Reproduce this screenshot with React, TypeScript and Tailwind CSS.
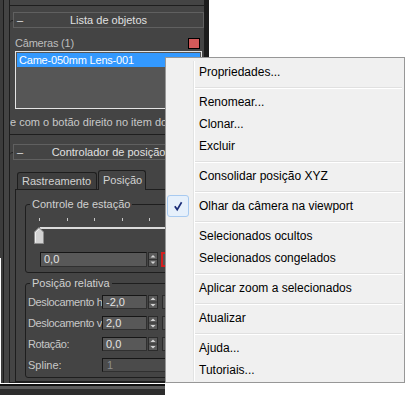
import React from "react";

const Spinner = ({ h = 15 }: { h?: number }) => (
  <svg width="10" height={h} viewBox={`0 0 10 ${h}`} className="block shrink-0">
    <rect x="0" y="0" width="10" height={h} fill="#5a5a5a" />
    <rect x="0.5" y="0.5" width="9" height={h - 1} fill="none" stroke="#2b2b2b" />
    <line x1="1" y1={h / 2} x2="9" y2={h / 2} stroke="#333" />
    <path d={`M2.5 ${h / 2 - 2} L5 ${h / 2 - 4.5} L7.5 ${h / 2 - 2} Z`} fill="#d4d4d4" />
    <path d={`M2.5 ${h / 2 + 2} L5 ${h / 2 + 4.5} L7.5 ${h / 2 + 2} Z`} fill="#d4d4d4" />
  </svg>
);

const Thumb = () => (
  <svg width="10" height="17" viewBox="0 0 10 17" className="block">
    <path d="M0.5 16.5 V5 L5 0.5 L9.5 5 V16.5 Z" fill="#d2d2d2" stroke="#8c8c8c" />
    <path d="M1.5 15.5 V5.4 L5 1.9" fill="none" stroke="#efefef" />
  </svg>
);

const Check = () => (
  <svg width="22" height="22" viewBox="0 0 22 22" className="block">
    <path d="M7.8 11.2 L10.2 14.6 L14.6 7.2" fill="none" stroke="#1b2d78" strokeWidth="1.7" />
  </svg>
);

const menuItems: (string | null)[] = [
  "Propriedades...",
  null,
  "Renomear...",
  "Clonar...",
  "Excluir",
  null,
  "Consolidar posição XYZ",
  null,
  "Olhar da câmera na viewport",
  null,
  "Selecionados ocultos",
  "Selecionados congelados",
  null,
  "Aplicar zoom a selecionados",
  null,
  "Atualizar",
  null,
  "Ajuda...",
  "Tutoriais...",
];

function Menu() {
  return (
    <div className="absolute left-[165px] top-[57px] z-30 w-[240px] border border-[#979797] bg-[#f0f0f0] pt-[3px] pb-[1px] pl-[1px] pr-[1px] text-[12px] text-black">
      {menuItems.map((it, i) =>
        it === null ? (
          <div key={i} className="flex h-[8px]">
            <div className="w-[26px]" />
            <div className="w-[1px] bg-[#e2e3e3]" />
            <div className="w-[1px] bg-white" />
            <div className="flex-1 flex flex-col pr-[1px]">
              <div className="h-[4px]" />
              <div className="h-[1px] bg-[#e0e0e0]" />
              <div className="h-[1px] bg-white" />
            </div>
          </div>
        ) : (
          <div key={i} className="flex h-[22px]">
            <div className="w-[26px] flex items-center">
              {it === "Olhar da câmera na viewport" && (
                <div className="w-[22px] h-[22px] rounded-[3px] border border-[#a8caf0] bg-[#e6f0fb]">
                  <div className="-m-[1px]">
                    <Check />
                  </div>
                </div>
              )}
            </div>
            <div className="w-[1px] bg-[#e2e3e3]" />
            <div className="w-[1px] bg-white" />
            <div className="flex-1 pl-[4px] leading-[22px] whitespace-nowrap">{it}</div>
          </div>
        )
      )}
    </div>
  );
}

function Field({ value }: { value: string }) {
  return (
    <div className="h-[14px] w-[45px] shrink-0 border border-t-[#161616] border-l-[#161616] border-b-[#303030] border-r-[#303030] bg-[#585858] pl-[3px] text-[11px] leading-[12px] text-[#e4e4e4]">
      {value}
    </div>
  );
}

function Row({ label, value }: { label: string; value: string }) {
  return (
    <div className="flex h-[14px] items-center">
      <div className="w-[76px] shrink-0 overflow-hidden whitespace-nowrap pl-[2px] text-[11px] leading-[14px] tracking-[-0.35px] text-[#c8c8c8]">
        {label}
      </div>
      <Field value={value} />
      <div className="ml-[1px]">
        <Spinner h={14} />
      </div>
      <div className="ml-[4px] h-[14px] w-[12px] shrink-0 border border-[#2a2a2a] bg-[#555]" />
    </div>
  );
}

export default function App() {
  return (
    <div className="relative flex h-[395px] w-[406px] overflow-hidden bg-white font-['Liberation_Sans',Arial,sans-serif]">
      <div className="flex w-[209px] shrink-0 flex-col">
        <div className="flex h-[383px]">
          <div className="flex w-[3px] flex-col">
            <div className="h-[258px] bg-[#3c3c3c]" />
            <div className="flex-1 border-l border-white bg-[#3c3c3c]" />
          </div>
          <div className="w-[1px] bg-[#1a1a1a]" />
          <div className="w-[5px] bg-[#444]" />
          <div className="flex w-[195px] flex-col border-l border-[#1e1e1e] bg-[#444]">
            <div className="h-[6px] border-b border-[#1e1e1e]" />
            <div className="h-[6px]" />
            {/* Rollout 1 */}
            <div className="flex flex-col">
              <div className="relative z-10 ml-[3px] flex h-[16px] items-center border border-[#606060] bg-[#444] text-[11px] text-[#e0e0e0]">
                <span className="w-[14px] pl-[3px] leading-[14px]">–</span>
                <span className="flex-1 text-center leading-[14px]">Lista de objetos</span>
                <span className="w-[14px]" />
              </div>
              <div className="-mt-[8px] rounded-tl-[3px] border-t border-b border-[#1e1e1e] pt-[14px] pb-[4px]">
                <div className="flex h-[16px] items-center justify-between pl-[5px] pr-[4px]">
                  <span className="text-[11px] tracking-[-0.2px] text-[#bdbdbd]">Câmeras (1)</span>
                  <div className="h-[11px] w-[12px] border border-black bg-[#d45a5a]" />
                </div>
                <div className="ml-[5px] mr-[2px] h-[58px] border border-[#e4e4e4] bg-[#565656] p-[1px]">
                  <div className="h-[14px] bg-[#3399ff] pl-[2px] text-[11px] leading-[14px] tracking-[-0.2px] text-white">
                    Came-050mm Lens-001
                  </div>
                </div>
                <div className="mt-[5px] h-[16px] overflow-hidden whitespace-nowrap text-[11px] leading-[16px] text-[#c8c8c8]">
                  e com o botão direito no item do menu
                </div>
              </div>
            </div>
            {/* Rollout 2 */}
            <div className="mt-[9px] flex flex-1 flex-col">
              <div className="relative z-10 ml-[3px] flex h-[16px] items-center border border-[#606060] bg-[#444] text-[11px] text-[#e0e0e0]">
                <span className="w-[14px] pl-[3px] leading-[14px]">–</span>
                <span className="flex-1 text-center leading-[14px] whitespace-nowrap">Controlador de posição</span>
                <span className="w-[14px]" />
              </div>
              <div className="-mt-[8px] flex flex-1 flex-col rounded-tl-[3px] border-t border-b border-[#1e1e1e] pt-[17px]">
                <div className="relative z-10 -mb-[1px] ml-[7px] flex h-[20px] items-end text-[11px] text-[#d2d2d2]">
                  <div className="mb-[1px] flex h-[17px] w-[80px] items-center rounded-t-[3px] border border-b-0 border-[#1e1e1e] bg-[#3e3e3e] pl-[4px]">
                    Rastreamento
                  </div>
                  <div className="ml-[1px] flex h-[20px] w-[48px] items-center rounded-t-[3px] border border-b-0 border-[#1e1e1e] bg-[#444] pl-[4px]">
                    Posição
                  </div>
                </div>
                <div className="ml-[5px] mr-[3px] flex flex-1 flex-col border-t border-l border-b border-[#1e1e1e] pb-[1px]">
                  <fieldset className="mt-[8px] ml-[9px] rounded-[3px] border border-[#1e1e1e] pb-[5px]">
                    <legend className="ml-[4px] px-[2px] text-[11px] leading-[13px] text-[#d0d0d0]">
                      Controle de estação
                    </legend>
                    <div className="mt-[7px] flex h-[3px]">
                      <div className="ml-[13px] w-[1px] bg-[#c8c8c8]" />
                      <div className="ml-[27px] w-[1px] bg-[#c8c8c8]" />
                      <div className="ml-[26px] w-[1px] bg-[#c8c8c8]" />
                      <div className="ml-[27px] w-[1px] bg-[#c8c8c8]" />
                      <div className="ml-[26px] w-[1px] bg-[#c8c8c8]" />
                      <div className="ml-[27px] w-[1px] bg-[#c8c8c8]" />
                    </div>
                    <div className="relative mt-[3px] h-[17px]">
                      <div className="ml-[14px] mt-[6px] h-[2px] bg-[#dcdcdc]" />
                      <div className="absolute left-[8px] top-0">
                        <Thumb />
                      </div>
                    </div>
                    <div className="mt-[8px] ml-[14px] flex items-center">
                      <div className="h-[15px] w-[107px] shrink-0 border border-t-[#161616] border-l-[#161616] border-b-[#303030] border-r-[#303030] bg-[#585858] pl-[3px] text-[11px] leading-[13px] text-[#e4e4e4]">
                        0,0
                      </div>
                      <div className="ml-[1px]">
                        <Spinner h={15} />
                      </div>
                      <div className="ml-[3px] h-[15px] w-[14px] shrink-0 border-2 border-[#d41e1e] bg-[#555]" />
                    </div>
                  </fieldset>
                  <fieldset className="mt-[4px] ml-[9px] rounded-[3px] border border-[#1e1e1e] pb-[5px]">
                    <legend className="ml-[4px] px-[2px] text-[11px] leading-[13px] text-[#d0d0d0]">
                      Posição relativa
                    </legend>
                    <div className="mt-[5px] flex flex-col gap-[7px]">
                      <Row label="Deslocamento h" value="-2,0" />
                      <Row label="Deslocamento v" value="2,0" />
                      <Row label="Rotação:" value="0,0" />
                      <div className="flex h-[14px] items-center">
                        <div className="w-[76px] shrink-0 pl-[2px] text-[11px] leading-[14px] text-[#c8c8c8]">
                          Spline:
                        </div>
                        <div className="h-[14px] w-[100px] shrink-0 border border-t-[#161616] border-l-[#161616] border-b-[#303030] border-r-[#303030] bg-[#4b4b4b] pl-[4px] text-[11px] leading-[12px] text-[#8e8e8e]">
                          1
                        </div>
                      </div>
                    </div>
                  </fieldset>
                </div>
              </div>
            </div>
          </div>
          <div className="w-[5px] bg-[#1c1c1c]" />
        </div>
        <div className="flex h-[12px] w-[165px] flex-col">
          <div className="h-[1px] bg-white" />
          <div className="h-[2px] bg-[#111]" />
          <div className="h-[3px] bg-[#5c5c5c]" />
          <div className="flex-1 bg-[#2d2d2d]" />
        </div>
      </div>
      <Menu />
    </div>
  );
}
